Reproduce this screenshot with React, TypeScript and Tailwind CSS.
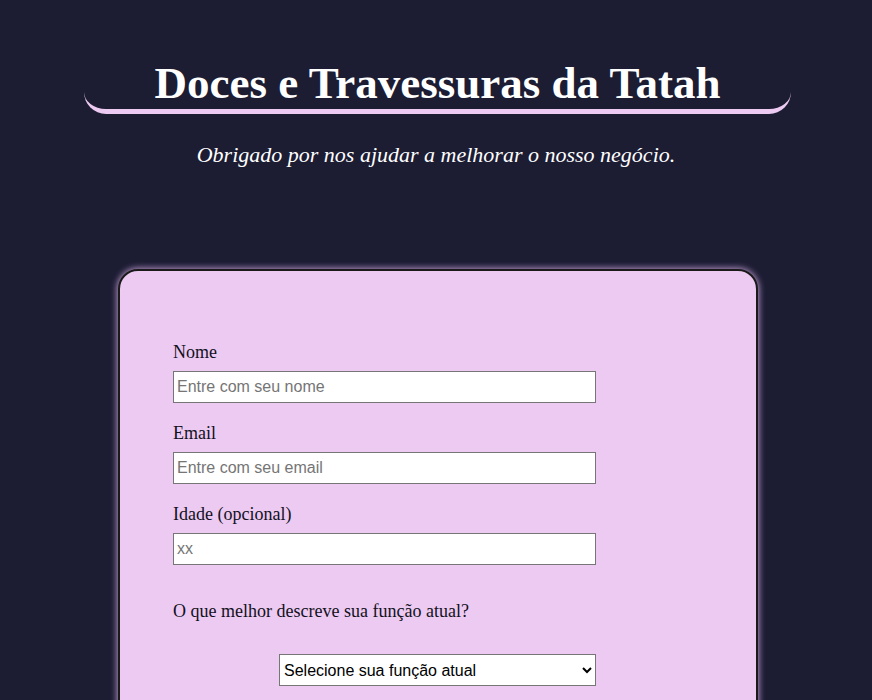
import React from 'react';

const serif = { fontFamily: '"Liberation Serif", "Times New Roman", serif' };

const Field = ({ label, placeholder, type = 'text' }: { label: string; placeholder: string; type?: string }) => (
  <div className="flex flex-col mb-[20px]">
    <label className="text-[18px] leading-[20px] text-[#111122] mb-[9px]">{label}</label>
    <input
      type={type}
      placeholder={placeholder}
      className="w-[423px] h-[32px] bg-white border border-[#767676] px-[3px] text-[16px] text-black placeholder:text-[#757575] font-['Liberation_Sans',sans-serif]"
    />
  </div>
);

export default function App() {
  return (
    <div className="min-h-[700px] bg-[#1c1c33] pt-[60px] pb-10" style={serif}>
      {/* cabeçalho */}
      <header className="ml-[84px] w-[707px] pb-[3px] border-b-[5px] border-[#edcaf1] rounded-b-[22px]">
        <h1 className="text-center text-white font-bold text-[45px] leading-[46px]">
          Doces e Travessuras da Tatah
        </h1>
      </header>
      <p className="mt-[24px] text-center text-white italic text-[22px] leading-[33px]">
        Obrigado por nos ajudar a melhorar o nosso negócio.
      </p>

      {/* formulário */}
      <main className="ml-[118px] mt-[98px] w-[640px] rounded-[20px] border-2 border-[#1a1a1a] bg-[#edcaf1] pl-[53px] pt-[71px] pb-10 shadow-[0_0_6px_1px_#b996c8]">
        <form className="w-[423px]">
          <Field label="Nome" placeholder="Entre com seu nome" />
          <Field label="Email" placeholder="Entre com seu email" type="email" />
          <Field label="Idade (opcional)" placeholder="xx" type="number" />
          <p className="text-[18px] leading-[20px] text-[#111122] mt-[36px]">O que melhor descreve sua função atual?</p>
          <div className="flex justify-end mt-[33px]">
            <select
              defaultValue=""
              className="w-[317px] h-[32px] bg-white border border-[#767676] text-[16px] text-black px-0 font-['Liberation_Sans',sans-serif]"
            >
              <option value="" disabled>Selecione sua função atual</option>
              <option>Estudante</option>
              <option>Profissional</option>
              <option>Outro</option>
            </select>
          </div>
        </form>
      </main>
    </div>
  );
}
